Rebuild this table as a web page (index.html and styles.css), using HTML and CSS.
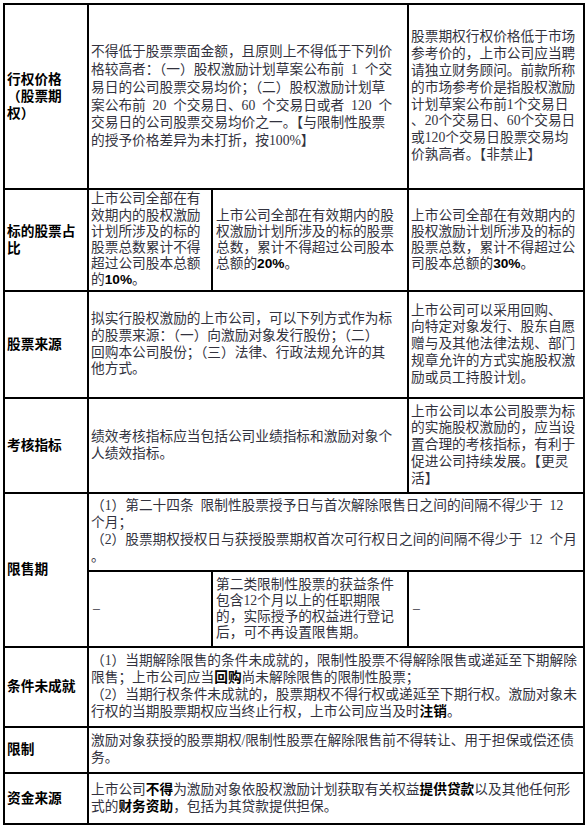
FILE: index.html
```html
<!DOCTYPE html>
<html lang="zh-CN">
<head>
<meta charset="utf-8">
<title>股权激励对比</title>
<link rel="stylesheet" href="styles.css">
</head>
<body>
<div class="sheet">
  <div class="lbl"><p>行权价格<br>（股票期<br>权）</p></div>
  <div class="cell s2 tall"><p>不得低于股票票面金额，且原则上不得低于下列价<br>格较高者：（一）股权激励计划草案公布前 1 个交<br>易日的公司股票交易均价；（二）股权激励计划草<br>案公布前 20 个交易日、60 个交易日或者 120 个<br>交易日的公司股票交易均价之一。【与限制性股票<br>的授予价格差异为未打折，按100%】</p></div>
  <div class="cell"><p>股票期权行权价格低于市场<br>参考价的，上市公司应当聘<br>请独立财务顾问。前款所称<br>的市场参考价是指股权激励<br>计划草案公布前1个交易日<br>、20个交易日、60个交易日<br>或120个交易日股票交易均<br>价孰高者。【非禁止】</p></div>

  <div class="lbl"><p>标的股票占<br>比</p></div>
  <div class="cell tight"><p>上市公司全部在有<br>效期内的股权激励<br>计划所涉及的标的<br>股票总数累计不得<br>超过公司股本总额<br>的<b class="num">10%</b>。</p></div>
  <div class="cell tight pc"><p>上市公司全部在有效期内的股<br>权激励计划所涉及的标的股票<br>总数，累计不得超过公司股本<br>总额的<b class="num">20%</b>。</p></div>
  <div class="cell tight"><p>上市公司全部在有效期内的<br>股权激励计划所涉及的标的<br>股票总数，累计不得超过公<br>司股本总额的<b class="num">30%</b>。</p></div>

  <div class="lbl"><p>股票来源</p></div>
  <div class="cell s2"><p>拟实行股权激励的上市公司，可以下列方式作为标<br>的股票来源：（一）向激励对象发行股份；（二）<br>回购本公司股份；（三）法律、行政法规允许的其<br>他方式。</p></div>
  <div class="cell"><p>上市公司可以采用回购、<br>向特定对象发行、股东自愿<br>赠与及其他法律法规、部门<br>规章允许的方式实施股权激<br>励或员工持股计划。</p></div>

  <div class="lbl"><p>考核指标</p></div>
  <div class="cell s2"><p>绩效考核指标应当包括公司业绩指标和激励对象个<br>人绩效指标。</p></div>
  <div class="cell"><p>上市公司以本公司股票为标<br>的实施股权激励的，应当设<br>置合理的考核指标，有利于<br>促进公司持续发展。【更灵<br>活】</p></div>

  <div class="lbl r2"><p>限售期</p></div>
  <div class="cell s3"><p>（1）第二十四条 限制性股票授予日与首次解除限售日之间的间隔不得少于 12<br>个月；<br>（2）股票期权授权日与获授股票期权首次可行权日之间的间隔不得少于 12 个月<br>。</p></div>
  <div class="cell"><p class="dash">–</p></div>
  <div class="cell tight pc"><p>第二类限制性股票的获益条件<br>包含12个月以上的任职期限<br>的，实际授予的权益进行登记<br>后，可不再设置限售期。</p></div>
  <div class="cell"><p class="dash">–</p></div>

  <div class="lbl"><p>条件未成就</p></div>
  <div class="cell s3"><p>（1）当期解除限售的条件未成就的，限制性股票不得解除限售或递延至下期解除<br>限售；上市公司应当<b>回购</b>尚未解除限售的限制性股票；<br>（2）当期行权条件未成就的，股票期权不得行权或递延至下期行权。激励对象未<br>行权的当期股票期权应当终止行权，上市公司应当及时<b>注销</b>。</p></div>

  <div class="lbl"><p>限制</p></div>
  <div class="cell s3"><p>激励对象获授的股票期权/限制性股票在解除限售前不得转让、用于担保或偿还债<br>务。</p></div>

  <div class="lbl"><p>资金来源</p></div>
  <div class="cell s3"><p>上市公司<b>不得</b>为激励对象依股权激励计划获取有关权益<b>提供贷款</b>以及其他任何形<br>式的<b>财务资助</b>，包括为其贷款提供担保。</p></div>
</div>
</body>
</html>
```

FILE: styles.css
```css
html, body {
  margin: 0;
  padding: 0;
  background: #ffffff;
}

.sheet {
  box-sizing: border-box;
  width: 582px;
  margin: 3px 0 0 3px;
  padding: 2px;
  background: #000000;
  display: grid;
  grid-template-columns: 82px 122px 194px 174px;
  grid-template-rows: 183px 100px 105px 93px 76px 74px 78px 44px 49px;
  gap: 2px;
  font-size: 13.7px;
}

.lbl,
.cell {
  background: #ffffff;
  display: flex;
  align-items: center;
  padding: 0 2px;
  min-width: 0;
  overflow: hidden;
}

.lbl p {
  margin: 0;
  font-family: "Liberation Sans", "Noto Sans CJK SC", sans-serif;
  font-weight: 700;
  color: #000000;
  line-height: 17.3px;
  white-space: nowrap;
}

.cell p {
  margin: 0;
  font-family: "Liberation Serif", "Noto Sans CJK SC", serif;
  color: #32323e;
  line-height: 16.8px;
  white-space: nowrap;
  word-spacing: 0.25em;
}

.cell.tall p {
  line-height: 17.7px;
}

.cell.tight p {
  line-height: 16.2px;
}

.cell.pc {
  padding-left: 3px;
}

.cell b {
  font-family: "Liberation Sans", "Noto Sans CJK SC", sans-serif;
  font-weight: 700;
  color: #000000;
}

.s2 {
  grid-column: span 2;
}

.s3 {
  grid-column: span 3;
}

.r2 {
  grid-row: span 2;
}

.dash {
  padding-left: 2px;
}
```
